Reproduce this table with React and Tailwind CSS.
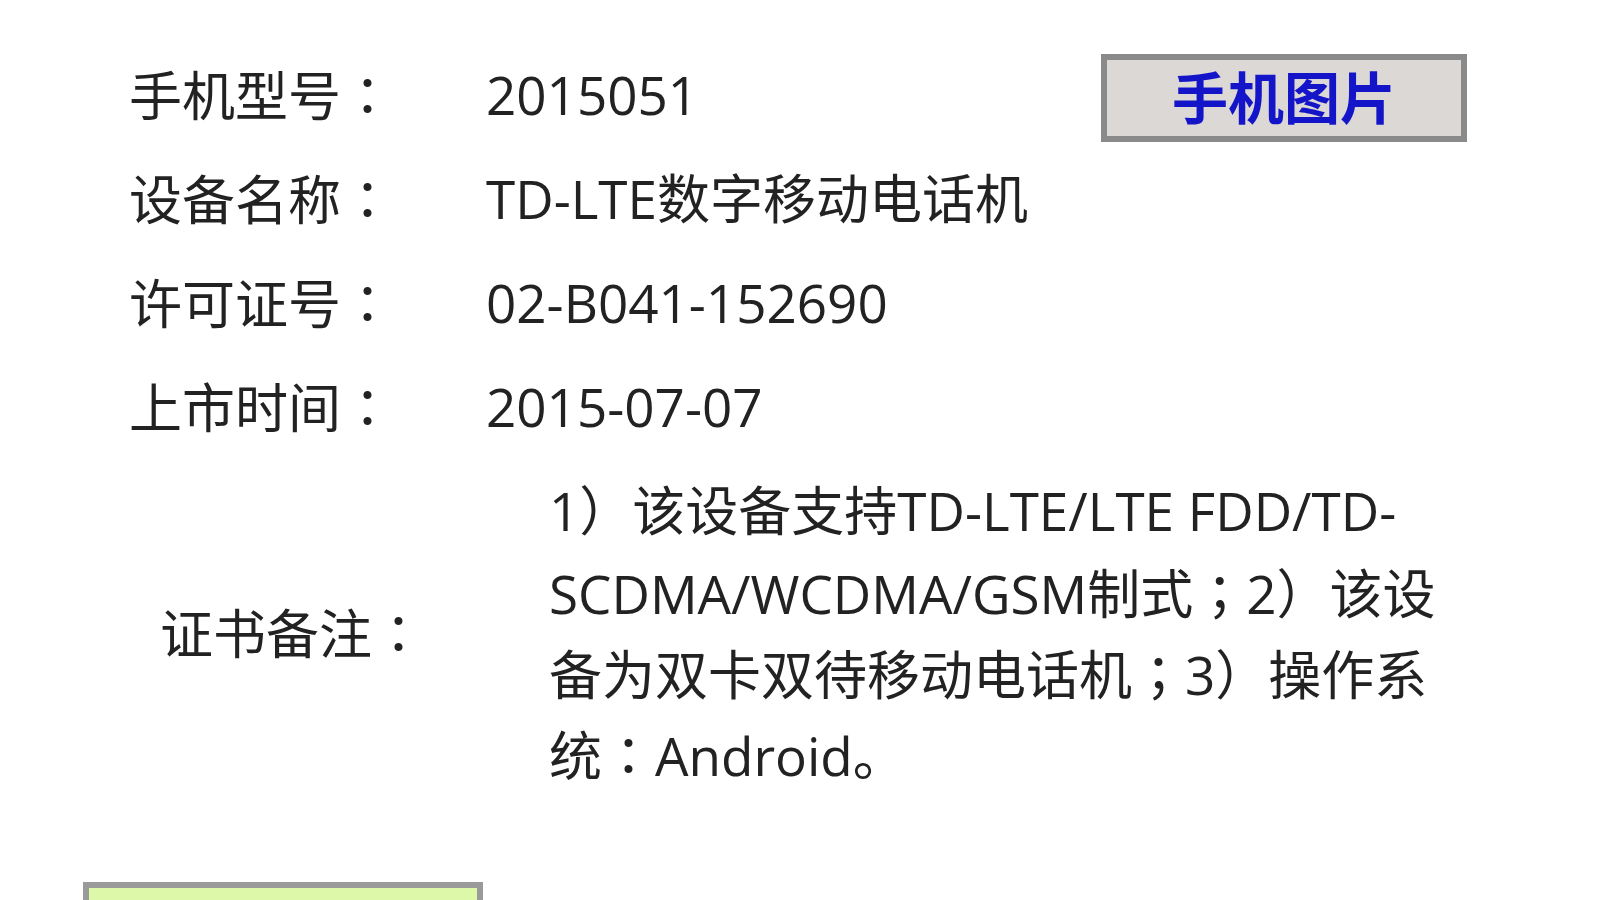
import React from 'react';

// full-width punctuation centred in its cell, like the Android fallback font
const P = ({ children }) => (
  <span className="font-['Noto_Sans_CJK_TC',sans-serif]">{children}</span>
);

const rows = [
  { label: '手机型号', value: '2015051' },
  { label: '设备名称', value: 'TD-LTE数字移动电话机' },
  { label: '许可证号', value: '02-B041-152690' },
  { label: '上市时间', value: '2015-07-07' },
];

export default function App() {
  return (
    <div className="w-[1600px] h-[900px] overflow-hidden bg-white text-[#222222] font-['Open_Sans','Noto_Sans_CJK_SC',sans-serif]">
      <div className="pl-[129px] pr-[133px] pt-[42px]">
        {rows.map((row, i) => (
          <div key={row.label} className="flex items-center h-[104px] text-[53px] leading-none">
            <div className="w-[357px] shrink-0">
              {row.label}
              <P>：</P>
            </div>
            <div className="flex-1 whitespace-nowrap">{row.value}</div>
            {i === 0 && (
              <button className="self-start mt-[12px] w-[366px] h-[88px] pb-[6px] border-[6px] border-[#8a8a8a] bg-[#dbd8d6] text-[#1414c8] text-[56px] font-bold leading-none flex items-center justify-center font-['Noto_Sans_CJK_SC',sans-serif]">
                手机图片
              </button>
            )}
          </div>
        ))}

        {/* 证书备注 */}
        <div className="flex items-center mt-[12px] text-[53px]">
          <div className="w-[420px] shrink-0 pl-[31px] leading-none">
            证书备注<P>：</P>
          </div>
          <div className="w-[921px] whitespace-nowrap">
            <div className="h-[81px] leading-[81px]">1）该设备支持TD-LTE/LTE FDD/TD-</div>
            <div className="h-[81px] leading-[81px]">SCDMA/WCDMA/GSM制式<P>；</P>2）该设</div>
            <div className="h-[81px] leading-[81px]">备为双卡双待移动电话机<P>；</P>3）操作系</div>
            <div className="h-[81px] leading-[81px]">统<P>：</P>Android。</div>
          </div>
        </div>
      </div>

      <div className="ml-[83px] mt-[88px] w-[400px] h-[90px] border-[6px] border-[#9a9a9a] bg-[#dcf8a8]" />
    </div>
  );
}
